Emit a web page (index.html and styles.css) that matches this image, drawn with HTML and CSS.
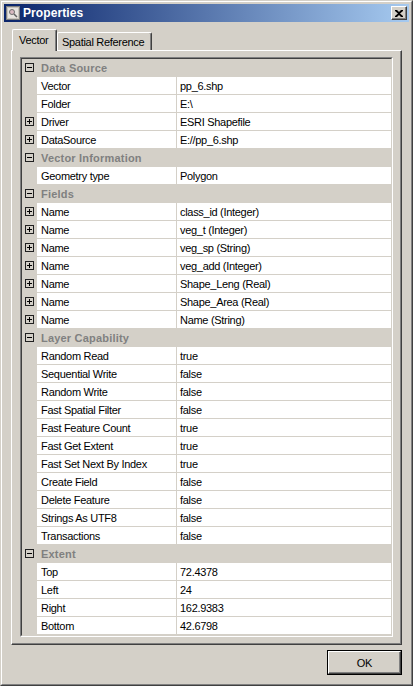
FILE: index.html
```html
<!DOCTYPE html>
<html>
<head>
<meta charset="utf-8">
<title>Properties</title>
<link rel="stylesheet" href="styles.css">
</head>
<body>
<div class="window">
  <div class="window-inner">
    <div class="titlebar">
      <svg class="title-icon" width="16" height="16" viewBox="0 0 16 16">
        <rect x="1.5" y="1.5" width="13" height="13" fill="#c8c4bc" stroke="#808080"/>
        <rect x="3" y="3" width="10" height="10" fill="#e8e4e0"/>
        <circle cx="7" cy="7" r="2.5" fill="#d8b8c0" stroke="#707070"/>
        <path d="M9 9 L12 12" stroke="#606060" stroke-width="1.5"/>
      </svg>
      <span class="title-text">Properties</span>
      <div class="close">
        <svg width="8" height="7" viewBox="0 0 8 7"><path d="M0 0h2l2 2 2-2h2v1L5 3.5 8 6v1H6L4 5 2 7H0V6l3-2.5L0 1z" fill="#000"/></svg>
      </div>
    </div>
    <div class="content">
      <div class="tabs">
        <div class="tab active">Vector</div>
        <div class="tab">Spatial Reference</div>
      </div>
      <div class="panel">
        <div class="tree">
          <div class="tree-inner">
            <div class="row cat"><div class="gut"><span class="box minus"></span></div><div class="catlabel">Data Source</div></div>
            <div class="row"><div class="gut"></div><div class="name">Vector</div><div class="val">pp_6.shp</div></div>
            <div class="row"><div class="gut"></div><div class="name">Folder</div><div class="val">E:\</div></div>
            <div class="row"><div class="gut"><span class="box plus"></span></div><div class="name">Driver</div><div class="val">ESRI Shapefile</div></div>
            <div class="row"><div class="gut"><span class="box plus"></span></div><div class="name">DataSource</div><div class="val">E://pp_6.shp</div></div>
            <div class="row cat"><div class="gut"><span class="box minus"></span></div><div class="catlabel">Vector Information</div></div>
            <div class="row"><div class="gut"></div><div class="name">Geometry type</div><div class="val">Polygon</div></div>
            <div class="row cat"><div class="gut"><span class="box minus"></span></div><div class="catlabel">Fields</div></div>
            <div class="row"><div class="gut"><span class="box plus"></span></div><div class="name">Name</div><div class="val">class_id (Integer)</div></div>
            <div class="row"><div class="gut"><span class="box plus"></span></div><div class="name">Name</div><div class="val">veg_t (Integer)</div></div>
            <div class="row"><div class="gut"><span class="box plus"></span></div><div class="name">Name</div><div class="val">veg_sp (String)</div></div>
            <div class="row"><div class="gut"><span class="box plus"></span></div><div class="name">Name</div><div class="val">veg_add (Integer)</div></div>
            <div class="row"><div class="gut"><span class="box plus"></span></div><div class="name">Name</div><div class="val">Shape_Leng (Real)</div></div>
            <div class="row"><div class="gut"><span class="box plus"></span></div><div class="name">Name</div><div class="val">Shape_Area (Real)</div></div>
            <div class="row"><div class="gut"><span class="box plus"></span></div><div class="name">Name</div><div class="val">Name (String)</div></div>
            <div class="row cat"><div class="gut"><span class="box minus"></span></div><div class="catlabel">Layer Capability</div></div>
            <div class="row"><div class="gut"></div><div class="name">Random Read</div><div class="val">true</div></div>
            <div class="row"><div class="gut"></div><div class="name">Sequential Write</div><div class="val">false</div></div>
            <div class="row"><div class="gut"></div><div class="name">Random Write</div><div class="val">false</div></div>
            <div class="row"><div class="gut"></div><div class="name">Fast Spatial Filter</div><div class="val">false</div></div>
            <div class="row"><div class="gut"></div><div class="name">Fast Feature Count</div><div class="val">true</div></div>
            <div class="row"><div class="gut"></div><div class="name">Fast Get Extent</div><div class="val">true</div></div>
            <div class="row"><div class="gut"></div><div class="name">Fast Set Next By Index</div><div class="val">true</div></div>
            <div class="row"><div class="gut"></div><div class="name">Create Field</div><div class="val">false</div></div>
            <div class="row"><div class="gut"></div><div class="name">Delete Feature</div><div class="val">false</div></div>
            <div class="row"><div class="gut"></div><div class="name">Strings As UTF8</div><div class="val">false</div></div>
            <div class="row"><div class="gut"></div><div class="name">Transactions</div><div class="val">false</div></div>
            <div class="row cat"><div class="gut"><span class="box minus"></span></div><div class="catlabel">Extent</div></div>
            <div class="row"><div class="gut"></div><div class="name">Top</div><div class="val">72.4378</div></div>
            <div class="row"><div class="gut"></div><div class="name">Left</div><div class="val">24</div></div>
            <div class="row"><div class="gut"></div><div class="name">Right</div><div class="val">162.9383</div></div>
            <div class="row"><div class="gut"></div><div class="name">Bottom</div><div class="val">42.6798</div></div>
          </div>
        </div>
      </div>
      <div class="footer">
        <div class="btn"><div class="btn-inner">OK</div></div>
      </div>
    </div>
  </div>
</div>
</body>
</html>
```
FILE: styles.css
```css
* { box-sizing: border-box; }
html, body { margin: 0; padding: 0; }
body {
  width: 413px;
  height: 686px;
  background: #d4d0c8;
  font-family: "Liberation Sans", Arial, sans-serif;
  font-size: 11px;
  letter-spacing: -0.3px;
  color: #000;
  overflow: hidden;
}
.window {
  width: 413px;
  height: 686px;
  border: 1px solid;
  border-color: #d4d0c8 #404040 #404040 #d4d0c8;
}
.window-inner {
  height: 100%;
  border: 1px solid;
  border-color: #fff #808080 #808080 #fff;
  padding: 2px;
  display: flex;
  flex-direction: column;
}
.titlebar {
  height: 18px;
  flex: none;
  background: linear-gradient(to right, #0a246a, #a6caf0);
  display: flex;
  align-items: center;
  padding: 0 2px 0 1px;
  color: #fff;
}
.title-icon { flex: none; margin-right: 2px; }
.title-text {
  flex: 1;
  font-weight: bold;
  font-size: 12px;
  letter-spacing: 0.1px;
}
.close {
  width: 16px;
  height: 14px;
  background: #d4d0c8;
  border: 1px solid;
  border-color: #fff #404040 #404040 #fff;
  box-shadow: inset -1px -1px #808080;
  display: flex;
  align-items: center;
  justify-content: center;
  padding-right: 1px;
}
.content {
  flex: 1;
  padding: 7px;
  display: flex;
  flex-direction: column;
}
.tabs {
  height: 21px;
  flex: none;
  display: flex;
  align-items: flex-end;
  padding-left: 1px;
  position: relative;
  z-index: 1;
}
.tab {
  height: 18px;
  border-left: 1px solid #fff;
  border-top: 1px solid #fff;
  border-right: 1px solid #404040;
  box-shadow: inset -1px 0 #808080;
  border-radius: 2px 2px 0 0;
  padding: 0 6px 0 4px;
  display: flex;
  align-items: center;
  width: 95px;
  white-space: nowrap;
}
.tab.active {
  width: 45px;
  height: 22px;
  margin-bottom: -1px;
  background: #d4d0c8;
  padding: 0 0 1px 6px;
}
.panel {
  flex: none;
  height: 595px;
  border-left: 1px solid #fff;
  border-top: 1px solid #fff;
  border-right: 1px solid #404040;
  border-bottom: 1px solid #404040;
  box-shadow: inset -1px -1px #808080;
  padding: 6px 8px 7px 8px;
}
.tree {
  width: 373px;
  height: 580px;
  border: 1px solid;
  border-color: #808080 #fff #fff #808080;
}
.tree-inner {
  height: 100%;
  border: 1px solid;
  border-color: #404040 #d4d0c8 #d4d0c8 #404040;
  background: #d4d0c8;
}
.row {
  display: grid;
  grid-template-columns: 15px 140px 214px;
  height: 18px;
}
.gut {
  background: #d4d0c8;
  padding: 4px 0 0 3px;
}
.name, .val {
  background: #fff;
  border-bottom: 1px solid #d4d0c8;
  line-height: 16px;
  padding-top: 1px;
  white-space: nowrap;
  overflow: hidden;
}
.name {
  border-right: 1px solid #d4d0c8;
  padding-left: 4px;
}
.val { padding-left: 3px; }
.catlabel {
  grid-column: 2 / span 2;
  background: #d4d0c8;
  color: #808080;
  font-weight: bold;
  letter-spacing: 0.2px;
  line-height: 16px;
  padding-top: 1px;
  padding-left: 4px;
}
.box {
  display: block;
  width: 9px;
  height: 9px;
  border: 1px solid #202020;
  position: relative;
}
.box::before {
  content: "";
  position: absolute;
  left: 1px;
  top: 3px;
  width: 5px;
  height: 1px;
  background: #000;
}
.box.plus::after {
  content: "";
  position: absolute;
  left: 3px;
  top: 1px;
  width: 1px;
  height: 5px;
  background: #000;
}
.footer {
  flex: none;
  display: flex;
  justify-content: flex-end;
  margin-top: 5px;
}
.btn {
  width: 75px;
  height: 25px;
  border: 1px solid #000;
}
.btn-inner {
  height: 100%;
  border: 1px solid;
  border-color: #fff #404040 #404040 #fff;
  box-shadow: inset -1px -1px #808080;
  display: flex;
  align-items: center;
  justify-content: center;
  padding-top: 1px;
}
```
